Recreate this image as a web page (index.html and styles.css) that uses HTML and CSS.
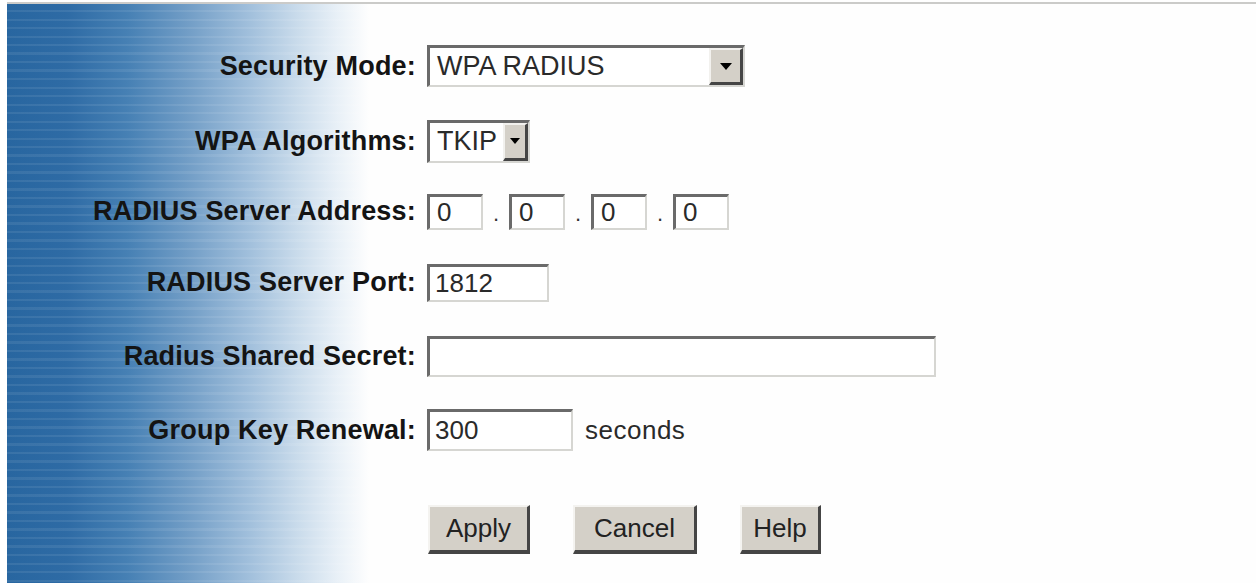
FILE: index.html
```html
<!DOCTYPE html>
<html>
<head>
<meta charset="utf-8">
<title>Wireless Security</title>
<link rel="stylesheet" href="styles.css">
</head>
<body>
<div class="page">
  <form class="form">
    <div class="label">Security Mode:</div>
    <div class="ctrl">
      <div class="select select--mode">
        <span class="select-value">WPA RADIUS</span>
        <span class="select-btn"><span class="arrow"></span></span>
      </div>
    </div>

    <div class="label">WPA Algorithms:</div>
    <div class="ctrl">
      <div class="select select--algo">
        <span class="select-value">TKIP</span>
        <span class="select-btn"><span class="arrow"></span></span>
      </div>
    </div>

    <div class="label">RADIUS Server Address:</div>
    <div class="ctrl ctrl--base">
      <input class="field field--ip" type="text" value="0">
      <span class="dot">.</span>
      <input class="field field--ip" type="text" value="0">
      <span class="dot">.</span>
      <input class="field field--ip" type="text" value="0">
      <span class="dot">.</span>
      <input class="field field--ip" type="text" value="0">
    </div>

    <div class="label">RADIUS Server Port:</div>
    <div class="ctrl">
      <input class="field field--port" type="text" value="1812">
    </div>

    <div class="label">Radius Shared Secret:</div>
    <div class="ctrl">
      <input class="field field--secret" type="text" value="">
    </div>

    <div class="label">Group Key Renewal:</div>
    <div class="ctrl ctrl--base">
      <input class="field field--renew" type="text" value="300">
      <span class="unit">seconds</span>
    </div>

    <div class="label label--empty"></div>
    <div class="ctrl buttons">
      <button type="button" class="btn btn--apply">Apply</button>
      <button type="button" class="btn btn--cancel">Cancel</button>
      <button type="button" class="btn btn--help">Help</button>
    </div>
  </form>
</div>
</body>
</html>
```

FILE: styles.css
```css
html, body {
  margin: 0;
  padding: 0;
  background: #ffffff;
  overflow: hidden;
}

.page {
  margin-top: 2px;
  margin-left: 7px;
  height: 581px;
  border-top: 2px solid #cbcbc9;
  box-sizing: border-box;
  background-color: #fefefe;
  background-image:
    repeating-linear-gradient(to bottom,
      rgba(255, 255, 255, 0) 0px,
      rgba(255, 255, 255, 0) 6px,
      rgba(255, 255, 255, 0.08) 6px,
      rgba(255, 255, 255, 0.08) 8.5px),
    linear-gradient(to right,
      #2866a0 0px,
      #2e6ba5 60px,
      #4680b4 120px,
      #719dc6 180px,
      #9fbedb 240px,
      #c9dbeb 290px,
      #e8f0f7 330px,
      #fefefe 362px);
  background-size: 364px 100%, 364px 100%;
  background-repeat: no-repeat;
  font-family: "Liberation Sans", Arial, sans-serif;
  color: #1a1a1a;
}

.form {
  display: grid;
  grid-template-columns: 409px auto;
  grid-template-rows: 78px 72px 69px 73px 75px 72px auto;
  column-gap: 11px;
  align-items: center;
  padding-top: 23px;
  margin: 0;
}

.label {
  text-align: right;
  font-weight: bold;
  font-size: 27px;
  letter-spacing: 0.2px;
  color: #141414;
  white-space: nowrap;
}

.ctrl {
  display: flex;
  align-items: center;
}

.ctrl--base {
  align-items: baseline;
}

/* inputs */
.field {
  box-sizing: border-box;
  margin: 0;
  padding: 0 0 0 5px;
  font-family: "Liberation Sans", Arial, sans-serif;
  font-size: 26px;
  color: #2a2a2a;
  background: #ffffff;
  border-style: solid;
  border-width: 3px 2px 2px 3px;
  border-color: #6a6a6a #d6d6d2 #d6d6d2 #6a6a6a;
  outline: none;
}

.field--ip {
  width: 56px;
  height: 36px;
  padding-left: 7px;
}

.field--port {
  width: 122px;
  height: 38px;
}

.field--secret {
  width: 509px;
  height: 41px;
}

.field--renew {
  width: 146px;
  height: 42px;
}

.dot {
  width: 26px;
  text-align: center;
  font-size: 22px;
  color: #333;
}

.unit {
  margin-left: 12px;
  font-size: 26px;
  color: #2a2a2a;
  letter-spacing: 0.5px;
}

/* select look-alike */
.select {
  box-sizing: border-box;
  display: flex;
  align-items: stretch;
  background: #ffffff;
  border-style: solid;
  border-width: 3px 2px 2px 3px;
  border-color: #6a6a6a #d6d6d2 #d6d6d2 #6a6a6a;
}

.select--mode {
  width: 318px;
  height: 42px;
}

.select--algo {
  width: 103px;
  height: 43px;
}

.select-value {
  flex: 1;
  display: flex;
  align-items: center;
  padding-left: 7px;
  font-size: 27px;
  color: #2a2a2a;
}

.select-btn {
  box-sizing: border-box;
  width: 34px;
  display: flex;
  align-items: center;
  justify-content: center;
  background: #d4d0c8;
  border-style: solid;
  border-width: 2px 3px 3px 2px;
  border-color: #f2f1ee #454545 #454545 #f2f1ee;
}

.select--algo .select-btn {
  width: 25px;
}

.arrow {
  width: 0;
  height: 0;
  border-left: 6px solid transparent;
  border-right: 6px solid transparent;
  border-top: 7px solid #000;
}

.select--algo .arrow {
  border-left-width: 5px;
  border-right-width: 5px;
  border-top-width: 6px;
}

/* buttons */
.buttons {
  align-self: start;
  padding-top: 39px;
  padding-left: 1px;
  gap: 43px;
}

.btn {
  box-sizing: border-box;
  height: 49px;
  margin: 0;
  padding: 0;
  font-family: "Liberation Sans", Arial, sans-serif;
  font-size: 26px;
  color: #222;
  background: #d4d0c8;
  border-style: solid;
  border-width: 2px 3px 4px 2px;
  border-color: #f4f3f0 #454545 #454545 #f4f3f0;
  cursor: pointer;
}

.btn--apply {
  width: 102px;
}

.btn--cancel {
  width: 124px;
}

.btn--help {
  width: 81px;
}
```
